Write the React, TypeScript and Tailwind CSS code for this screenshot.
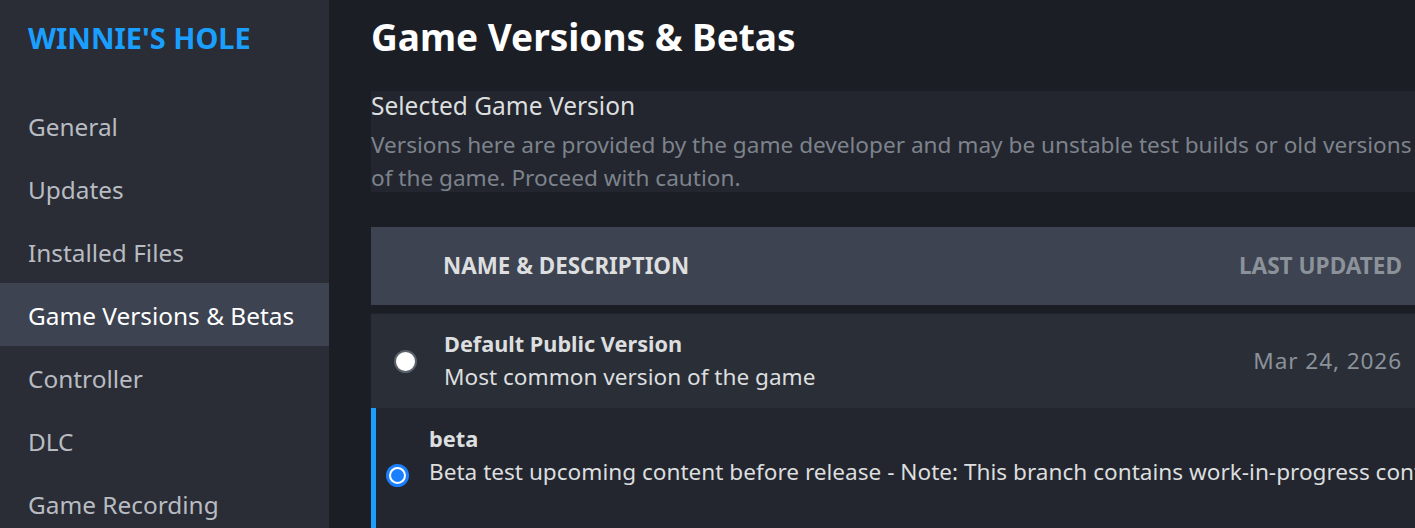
import React, { useState } from 'react';

type Branch = {
  id: string;
  name: string;
  description: string;
  updated?: string;
};

const NAV_ITEMS = [
  'General',
  'Updates',
  'Installed Files',
  'Game Versions & Betas',
  'Controller',
  'DLC',
  'Game Recording',
];

const BRANCHES: Branch[] = [
  {
    id: 'public',
    name: 'Default Public Version',
    description: 'Most common version of the game',
    updated: 'Mar 24, 2026',
  },
  {
    id: 'beta',
    name: 'beta',
    description:
      'Beta test upcoming content before release - Note: This branch contains work-in-progress content and may be unstable',
  },
];

const Radio: React.FC<{ checked: boolean }> = ({ checked }) =>
  checked ? (
    <span className="flex h-[23px] w-[23px] shrink-0 items-center justify-center rounded-full bg-[#1a7fff]">
      <span className="flex h-[17px] w-[17px] items-center justify-center rounded-full bg-white">
        <span className="h-[13px] w-[13px] rounded-full bg-[#1a7fff]" />
      </span>
    </span>
  ) : (
    <span className="h-[23px] w-[23px] shrink-0 rounded-full border-2 border-[#5b616b] bg-white" />
  );

const App: React.FC = () => {
  const [active, setActive] = useState('Game Versions & Betas');
  const [selected, setSelected] = useState('beta');

  return (
    <div className="flex h-[528px] w-[1415px] overflow-hidden bg-[#1b1e25] font-['Noto_Sans',sans-serif]">
      {/* Sidebar */}
      <aside className="flex w-[329px] shrink-0 flex-col bg-[#2a2d35]">
        <div className="flex h-[94px] shrink-0 items-start px-[28px] pt-[17px]">
          <h1 className="text-[29px] font-bold leading-[42px] text-[#1a9fff]">WINNIE'S HOLE</h1>
        </div>
        <nav className="flex flex-col">
          {NAV_ITEMS.map((item) => (
            <button
              key={item}
              onClick={() => setActive(item)}
              className={`flex h-[63px] shrink-0 items-center px-[28px] pt-[3px] text-left text-[24.4px] ${
                active === item ? 'bg-[#3d4350] text-white' : 'text-[#b8bcc2]'
              }`}
            >
              {item}
            </button>
          ))}
        </nav>
      </aside>

      {/* Main */}
      <main className="flex min-w-0 flex-1 flex-col pl-[42px]">
        <h2 className="h-[91px] shrink-0 pt-[10px] text-[37px] font-bold leading-[54px] text-white">
          Game Versions &amp; Betas
        </h2>

        <section className="h-[101px] w-[1100px] shrink-0 bg-[#23262e]">
          <div className="text-[24.5px] leading-[30px] text-[#dcdedf]">Selected Game Version</div>
          <p className="mt-[7px] whitespace-nowrap text-[22.6px] leading-[33px] text-[#7d838c]">
            Versions here are provided by the game developer and may be unstable test builds or old versions
            <br />
            of the game. Proceed with caution.
          </p>
        </section>

        {/* Branch table */}
        <div className="mt-[35px] w-[1100px] shrink-0">
          <div className="flex h-[78px] items-center bg-[#3d4350] pl-[72px] pr-[69px]">
            <span className="flex-1 text-[22.4px] font-bold text-[#dcdedf]">NAME &amp; DESCRIPTION</span>
            <span className="text-[22.6px] font-bold text-[#8b929a]">LAST UPDATED</span>
          </div>

          <div className="mt-[8px] flex flex-col">
            {BRANCHES.map((b) =>
              selected === b.id ? (
                <div
                  key={b.id}
                  onClick={() => setSelected(b.id)}
                  className="flex h-[130px] items-start border-l-[5px] border-[#1a9fff] bg-[#23262e] pl-[10px] pt-[14px]"
                >
                  <span className="mt-[42px]">
                    <Radio checked />
                  </span>
                  <div className="ml-[20px] flex flex-col">
                    <span className="text-[21.8px] font-bold leading-[33px] text-[#dcdedf]">{b.name}</span>
                    <span className="whitespace-nowrap text-[22.6px] leading-[33px] text-[#dcdedf]">
                      {b.description}
                    </span>
                  </div>
                </div>
              ) : (
                <div
                  key={b.id}
                  onClick={() => setSelected(b.id)}
                  className="flex h-[95px] items-center border-t border-[#1f222a] bg-[#2a2e37] pl-[23px] pr-[69px]"
                >
                  <Radio checked={false} />
                  <div className="ml-[27px] flex flex-1 flex-col pb-[2px]">
                    <span className="text-[21.7px] font-bold leading-[33px] text-[#dcdedf]">{b.name}</span>
                    <span className="text-[22.6px] leading-[33px] text-[#dcdedf]">{b.description}</span>
                  </div>
                  <span className="whitespace-nowrap text-right text-[22.6px] tracking-[0.9px] text-[#8b929a]">
                    {b.updated}
                  </span>
                </div>
              ),
            )}
          </div>
        </div>
      </main>
    </div>
  );
};

export default App;
